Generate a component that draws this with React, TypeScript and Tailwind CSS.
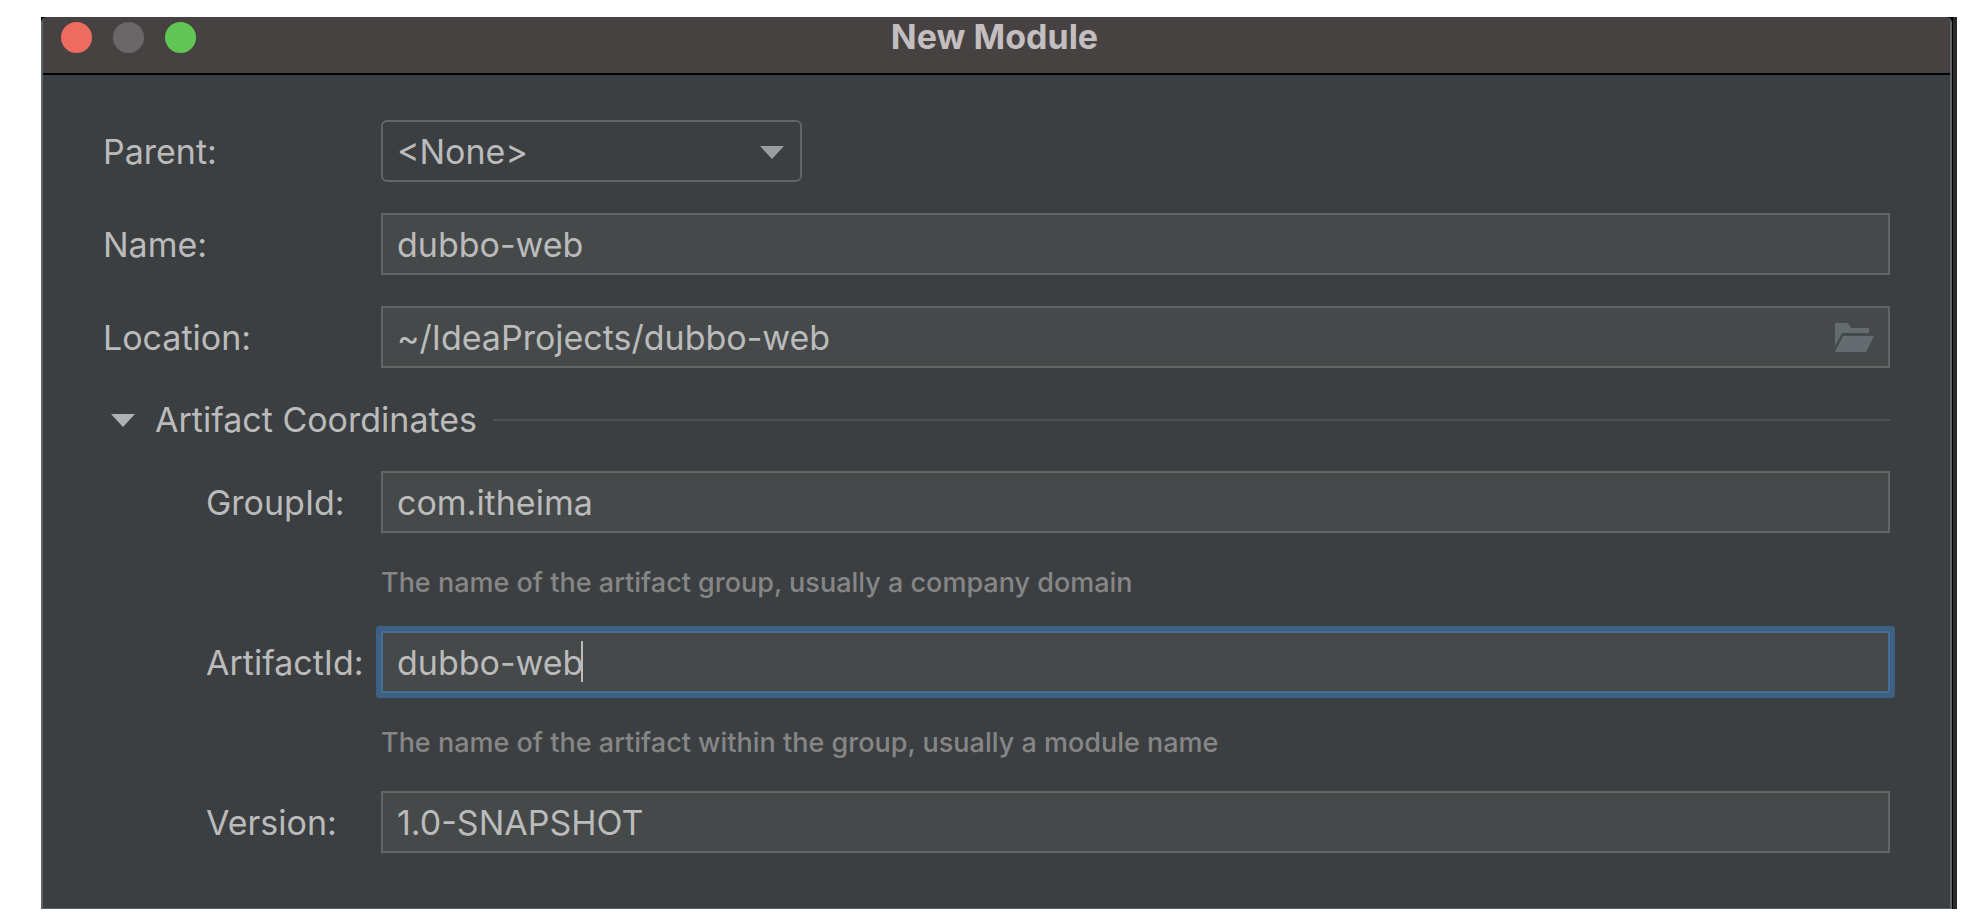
import { useState } from 'react';
import type { ReactNode } from 'react';

interface FieldRowProps {
  id: string;
  label: string;
  indent?: boolean;
  children: ReactNode;
}

function FieldRow({ id, label, indent = false, children }: FieldRowProps) {
  return (
    <div className="flex items-center">
      <label
        htmlFor={id}
        className={`w-[278px] shrink-0 pt-px whitespace-nowrap ${indent ? 'pl-[103px]' : ''}`}
      >
        {label}
      </label>
      {children}
    </div>
  );
}

interface TextFieldProps {
  id: string;
  value: string;
  onChange: (value: string) => void;
  active?: boolean;
  children?: ReactNode;
}

function TextField({ id, value, onChange, active = false, children }: TextFieldProps) {
  return (
    <div className="relative min-w-0 flex-1">
      <input
        id={id}
        type="text"
        value={value}
        onChange={(e) => onChange(e.target.value)}
        className={`block h-[62px] w-full border-2 px-[14px] outline-none ${
          active
            ? 'rounded-[1px] border-[#466d94] bg-[#45494a] ring-5 ring-[#3d6185]'
            : 'border-[#646464] bg-[#45494a]'
        }`}
      />
      {children}
    </div>
  );
}

function Triangle({ className }: { className: string }) {
  return (
    <svg viewBox="0 0 24 13" className={`h-[13px] w-6 ${className}`} aria-hidden="true">
      <path d="M0 0h24L12 13z" fill="currentColor" />
    </svg>
  );
}

function Hint({ children }: { children: ReactNode }) {
  return (
    <p className="flex h-[98px] items-center pt-px pl-[278px] text-[27px] font-medium text-[#868686]">
      {children}
    </p>
  );
}

export default function App() {
  const [parent, setParent] = useState('none');
  const [name, setName] = useState('dubbo-web');
  const [location, setLocation] = useState('~/IdeaProjects/dubbo-web');
  const [groupId, setGroupId] = useState('com.itheima');
  const [artifactId, setArtifactId] = useState('dubbo-web');
  const [version, setVersion] = useState('1.0-SNAPSHOT');
  const [expanded, setExpanded] = useState(true);

  return (
    <div className="bg-white pt-[17px] pr-[27px] pb-[13px] pl-[41px] font-['Inter',sans-serif] text-[34px] leading-10 text-[#bbbbbb]">
      <div className="border-r-4 border-[#292929] bg-black pr-px">
        <div className="overflow-hidden rounded-t-md border-x-2 border-b border-[#616466] bg-[#3c3f41]">
          {/* Title bar */}
          <header className="relative flex h-[58px] items-start justify-center border-b-2 border-black bg-[#474242] pr-1">
            <div className="absolute top-[5px] left-[18px] flex gap-[21px]">
              <button type="button" aria-label="Close" className="size-[31px] rounded-full bg-[#ed6b5f]" />
              <button type="button" aria-label="Minimize" disabled className="size-[31px] rounded-full bg-[#6b6667]" />
              <button type="button" aria-label="Zoom" className="size-[31px] rounded-full bg-[#62c655]" />
            </div>
            <h1 className="font-bold text-[#c3bebf]">New Module</h1>
          </header>

          <form className="pt-[45px] pr-[60px] pb-[55px] pl-[60px]" onSubmit={(e) => e.preventDefault()}>
            <div className="flex flex-col gap-[31px]">
              <FieldRow id="parent" label="Parent:">
                <div className="relative w-[421px]">
                  <select
                    id="parent"
                    value={parent}
                    onChange={(e) => setParent(e.target.value)}
                    className="block h-[62px] w-full appearance-none rounded-md border-2 border-[#646464] bg-[#3c3f41] px-[14px] pt-px outline-none"
                  >
                    <option value="none">&lt;None&gt;</option>
                  </select>
                  <Triangle className="pointer-events-none absolute top-[26px] right-[18px] text-[#9a9da0]" />
                </div>
              </FieldRow>
              <FieldRow id="name" label="Name:">
                <TextField id="name" value={name} onChange={setName} />
              </FieldRow>
              <FieldRow id="location" label="Location:">
                <TextField id="location" value={location} onChange={setLocation}>
                  <button type="button" aria-label="Browse" className="absolute top-[17px] right-4">
                    <svg viewBox="0 0 39 29" className="h-[29px] w-[39px]" aria-hidden="true">
                      <path d="M0 0h13l3 5h18v5H7L0 23z" fill="#646c70" />
                      <path d="M8 13h31l-8 16H0z" fill="#646c70" />
                    </svg>
                  </button>
                </TextField>
              </FieldRow>
            </div>

            <div className="flex h-[103px] items-center gap-4">
              <button
                type="button"
                aria-expanded={expanded}
                onClick={() => setExpanded(!expanded)}
                className="flex items-center gap-5 pt-px pl-2 whitespace-nowrap"
              >
                <Triangle className={expanded ? 'text-[#b0b1b2]' : '-rotate-90 text-[#b0b1b2]'} />
                Artifact Coordinates
              </button>
              <div className="h-[2px] flex-1 bg-[#515151]" />
            </div>

            {expanded && (
              <div>
                <FieldRow id="group-id" label="GroupId:" indent>
                  <TextField id="group-id" value={groupId} onChange={setGroupId} />
                </FieldRow>
                <Hint>The name of the artifact group, usually a company domain</Hint>
                <FieldRow id="artifact-id" label="ArtifactId:" indent>
                  <TextField id="artifact-id" value={artifactId} onChange={setArtifactId} active>
                    <span className="pointer-events-none absolute top-[10px] left-[200px] h-[41px] w-[2px] bg-[#bbbbbb]" />
                  </TextField>
                </FieldRow>
                <Hint>The name of the artifact within the group, usually a module name</Hint>
                <FieldRow id="version" label="Version:" indent>
                  <TextField id="version" value={version} onChange={setVersion} />
                </FieldRow>
              </div>
            )}
          </form>
        </div>
      </div>
    </div>
  );
}
